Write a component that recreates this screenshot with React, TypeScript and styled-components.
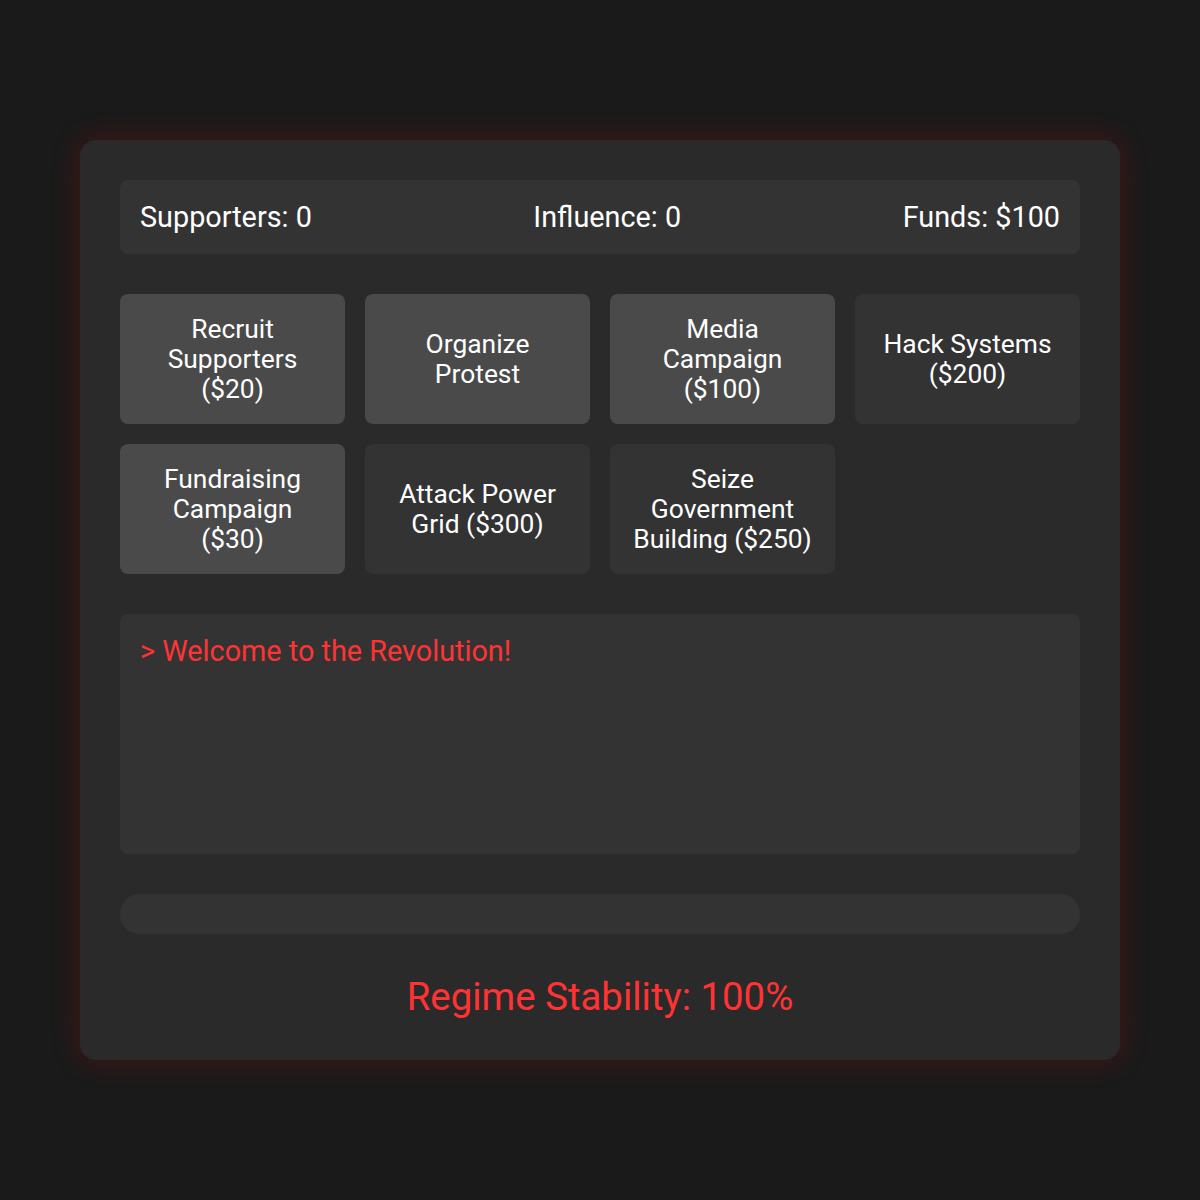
import React from "react";
import styled, { createGlobalStyle } from "styled-components";

const Global = createGlobalStyle`
  html, body { margin: 0; padding: 0; background: #1a1a1a; }
  body { font-family: Roboto, "Noto Sans", sans-serif; color: #fff; font-size: 24px; }
  * { box-sizing: border-box; }
`;

const Page = styled.div`
  min-height: 1200px;
  display: flex;
  justify-content: center;
  align-items: flex-start;
  padding-top: 140px;
`;

const Card = styled.div`
  width: 1040px;
  background: #2a2a2a;
  border-radius: 16px;
  padding: 40px;
  box-shadow: 0 0 30px rgba(255, 0, 0, 0.2);
  display: flex;
  flex-direction: column;
  gap: 40px;
`;

const Stats = styled.div`
  background: #333;
  border-radius: 8px;
  padding: 20px;
  display: flex;
  justify-content: space-between;
  font-size: 28.8px;
  line-height: 34px;
`;

const Grid = styled.div`
  display: grid;
  grid-template-columns: repeat(4, 1fr);
  gap: 20px;
`;

const ActionButton = styled.button<{ $enabled: boolean }>`
  height: 130px;
  padding: 20px;
  border: none;
  border-radius: 8px;
  background: ${(p) => (p.$enabled ? "#4a4a4a" : "#333")};
  color: #fff;
  font-family: Roboto, "Noto Sans", sans-serif;
  font-size: 26.4px;
  line-height: 30px;
  text-align: center;
`;

const Log = styled.div`
  background: #333;
  border-radius: 8px;
  height: 240px;
  padding: 20px;
  color: #ff3333;
  font-size: 28.8px;
  line-height: 34px;
`;

const Track = styled.div`
  height: 40px;
  border-radius: 20px;
  background: #333;
`;

const Stability = styled.div`
  text-align: center;
  color: #ff3333;
  font-size: 38.4px;
  line-height: 46px;
`;

const actions = [
  { label: "Recruit Supporters ($20)", enabled: true },
  { label: "Organize Protest", enabled: true },
  { label: "Media Campaign ($100)", enabled: true },
  { label: "Hack Systems ($200)", enabled: false },
  { label: "Fundraising Campaign ($30)", enabled: true },
  { label: "Attack Power Grid ($300)", enabled: false },
  { label: "Seize Government Building ($250)", enabled: false },
];

export default function App() {
  return (
    <>
      <Global />
      <Page>
        <Card>
          <Stats>
            <span>Supporters: 0</span>
            <span>Influence: 0</span>
            <span>Funds: $100</span>
          </Stats>
          <Grid>
            {actions.map((a) => (
              <ActionButton key={a.label} $enabled={a.enabled}>
                {a.label}
              </ActionButton>
            ))}
          </Grid>
          <Log>&gt; Welcome to the Revolution!</Log>
          <Track />
          <Stability>Regime Stability: 100%</Stability>
        </Card>
      </Page>
    </>
  );
}
